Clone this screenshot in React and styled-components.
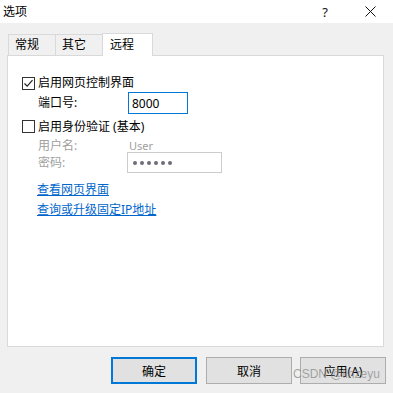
import React from 'react';
import styled, { createGlobalStyle } from 'styled-components';

const FONT = `"Noto Sans", "Noto Sans CJK SC", sans-serif`;

const GlobalStyle = createGlobalStyle`
  html, body {
    margin: 0;
    padding: 0;
    background: #f0f0f0;
  }
  body {
    font-family: ${FONT};
    font-size: 12px;
    color: #000;
  }
`;

const CheckIcon = () => (
  <svg width="11" height="11" viewBox="0 0 11 11">
    <path d="M1.5 5.5 L4.2 8.2 L9.5 2.2" fill="none" stroke="#222" strokeWidth="1.2" />
  </svg>
);

const CloseIcon = () => (
  <svg width="11" height="11" viewBox="0 0 11 11">
    <path d="M0.5 0.5 L10.5 10.5 M10.5 0.5 L0.5 10.5" stroke="#111" strokeWidth="1" />
  </svg>
);

const Checkbox = ({ checked }) => (
  <CheckBoxBox>{checked ? <CheckIcon /> : null}</CheckBoxBox>
);

const App = () => {
  return (
    <Window>
      <GlobalStyle />
      <TitleBar>
        <Title>选项</Title>
        <TitleButtons>
          <TitleButton>?</TitleButton>
          <TitleButton>
            <CloseIcon />
          </TitleButton>
        </TitleButtons>
      </TitleBar>

      <Body>
        <TabStrip>
          <Tab w={48}>常规</Tab>
          <Tab w={48}>其它</Tab>
          <Tab w={51} active>远程</Tab>
        </TabStrip>

        <Panel>
          <Row h={18}>
            <Checkbox checked />
            <CheckLabel>启用网页控制界面</CheckLabel>
          </Row>
          <Row h={22} indent>
            <FieldLabel>端口号:</FieldLabel>
            <PortInput>8000</PortInput>
          </Row>
          <Row h={25}>
            <Checkbox />
            <CheckLabel>启用身份验证 (基本)</CheckLabel>
          </Row>
          <Row h={13} indent>
            <FieldLabel disabled>用户名:</FieldLabel>
            <UserValue>User</UserValue>
          </Row>
          <Row h={21} indent>
            <FieldLabel disabled>密码:</FieldLabel>
            <PasswordBox>
              {Array.from({ length: 6 }).map((_, i) => (
                <Dot key={i} />
              ))}
            </PasswordBox>
          </Row>
          <LinkRow top={7}>
            <Link>查看网页界面</Link>
          </LinkRow>
          <LinkRow>
            <Link>查询或升级固定IP地址</Link>
          </LinkRow>
        </Panel>

        <Footer>
          <Button primary>确定</Button>
          <Button>取消</Button>
          <Button>应用(A)</Button>
        </Footer>
      </Body>

      <Watermark>CSDN @linzeyu</Watermark>
    </Window>
  );
};

const Window = styled.div`
  position: relative;
  width: 393px;
  height: 393px;
  display: flex;
  flex-direction: column;
  background: #f0f0f0;
  overflow: hidden;
`;

const TitleBar = styled.div`
  height: 23px;
  background: #fff;
  display: flex;
  align-items: center;
  justify-content: space-between;
`;

const Title = styled.div`
  padding-left: 3px;
  font-size: 12px;
  line-height: 23px;
`;

const TitleButtons = styled.div`
  display: flex;
  height: 100%;
`;

const TitleButton = styled.div`
  width: 46px;
  height: 100%;
  display: flex;
  align-items: center;
  justify-content: center;
  font-size: 13px;
  color: #111;
  &:last-child {
    width: 45px;
  }
`;

const Body = styled.div`
  flex: 1;
  display: flex;
  flex-direction: column;
  padding: 10px 9px 0 7px;
`;

const TabStrip = styled.div`
  position: relative;
  z-index: 1;
  display: flex;
  align-items: flex-end;
  height: 23px;
  margin-left: 1px;
  margin-bottom: -1px;
`;

const Tab = styled.div`
  box-sizing: border-box;
  width: ${(p) => p.w}px;
  height: ${(p) => (p.active ? 23 : 21)}px;
  margin-bottom: ${(p) => (p.active ? 0 : 1)}px;
  padding: 0 0 ${(p) => (p.active ? 1 : 0)}px ${(p) => (p.active ? 7 : 6)}px;
  margin-left: -1px;
  &:first-child {
    margin-left: 0;
  }
  border: 1px solid #d9d9d9;
  border-bottom: none;
  background: ${(p) => (p.active ? '#fff' : '#f0f0f0')};
  display: flex;
  align-items: center;
  line-height: 1;
  font-size: 12px;
`;

const Panel = styled.div`
  box-sizing: border-box;
  height: 292px;
  background: #fff;
  border: 1px solid #d9d9d9;
  padding: 18px 0 0 14px;
  display: flex;
  flex-direction: column;
`;

const Row = styled.div`
  height: ${(p) => p.h}px;
  display: flex;
  align-items: center;
  padding-left: ${(p) => (p.indent ? 16 : 0)}px;
`;

const CheckBoxBox = styled.div`
  box-sizing: border-box;
  width: 13px;
  height: 13px;
  border: 1px solid #333;
  background: #fff;
  display: flex;
  align-items: center;
  justify-content: center;
  flex-shrink: 0;
`;

const CheckLabel = styled.span`
  margin-left: 3px;
  font-size: 12px;
  line-height: 1;
`;

const FieldLabel = styled.span`
  width: 90px;
  font-size: 12px;
  line-height: 1;
  color: ${(p) => (p.disabled ? '#a0a0a0' : '#000')};
`;

const PortInput = styled.div`
  box-sizing: border-box;
  width: 60px;
  height: 22px;
  border: 1px solid #0078d7;
  padding-left: 3px;
  display: flex;
  align-items: center;
  font-size: 12px;
`;

const UserValue = styled.span`
  padding-left: 1px;
  font-size: 11px;
  color: #a0a0a0;
  line-height: 1;
`;

const PasswordBox = styled.div`
  box-sizing: border-box;
  width: 95px;
  height: 21px;
  margin-left: -1px;
  border: 1px solid #cccccc;
  padding-left: 5px;
  display: flex;
  align-items: center;
  gap: 3px;
`;

const Dot = styled.span`
  width: 4px;
  height: 4px;
  border-radius: 50%;
  background: #6d6d78;
`;

const LinkRow = styled.div`
  height: 20px;
  margin-top: ${(p) => p.top || 0}px;
  display: flex;
  align-items: center;
  padding-left: 15px;
`;

const Link = styled.a`
  color: #0066cc;
  text-decoration: underline;
  font-size: 12px;
  line-height: 1;
  cursor: pointer;
`;

const Footer = styled.div`
  display: flex;
  justify-content: flex-end;
  gap: 8px;
  margin-top: 10px;
  margin-right: -2px;
`;

const Button = styled.div`
  box-sizing: border-box;
  width: 86px;
  height: 27px;
  background: #e1e1e1;
  border: ${(p) => (p.primary ? '2px solid #0078d7' : '1px solid #adadad')};
  display: flex;
  align-items: center;
  justify-content: center;
  font-size: 12px;
  &:first-child {
    margin-right: 1px;
  }
`;

const Watermark = styled.div`
  position: absolute;
  left: 293px;
  top: 367px;
  font-family: "Liberation Sans", sans-serif;
  font-size: 12px;
  color: rgba(140, 140, 140, 0.75);
  pointer-events: none;
`;

export default App;
